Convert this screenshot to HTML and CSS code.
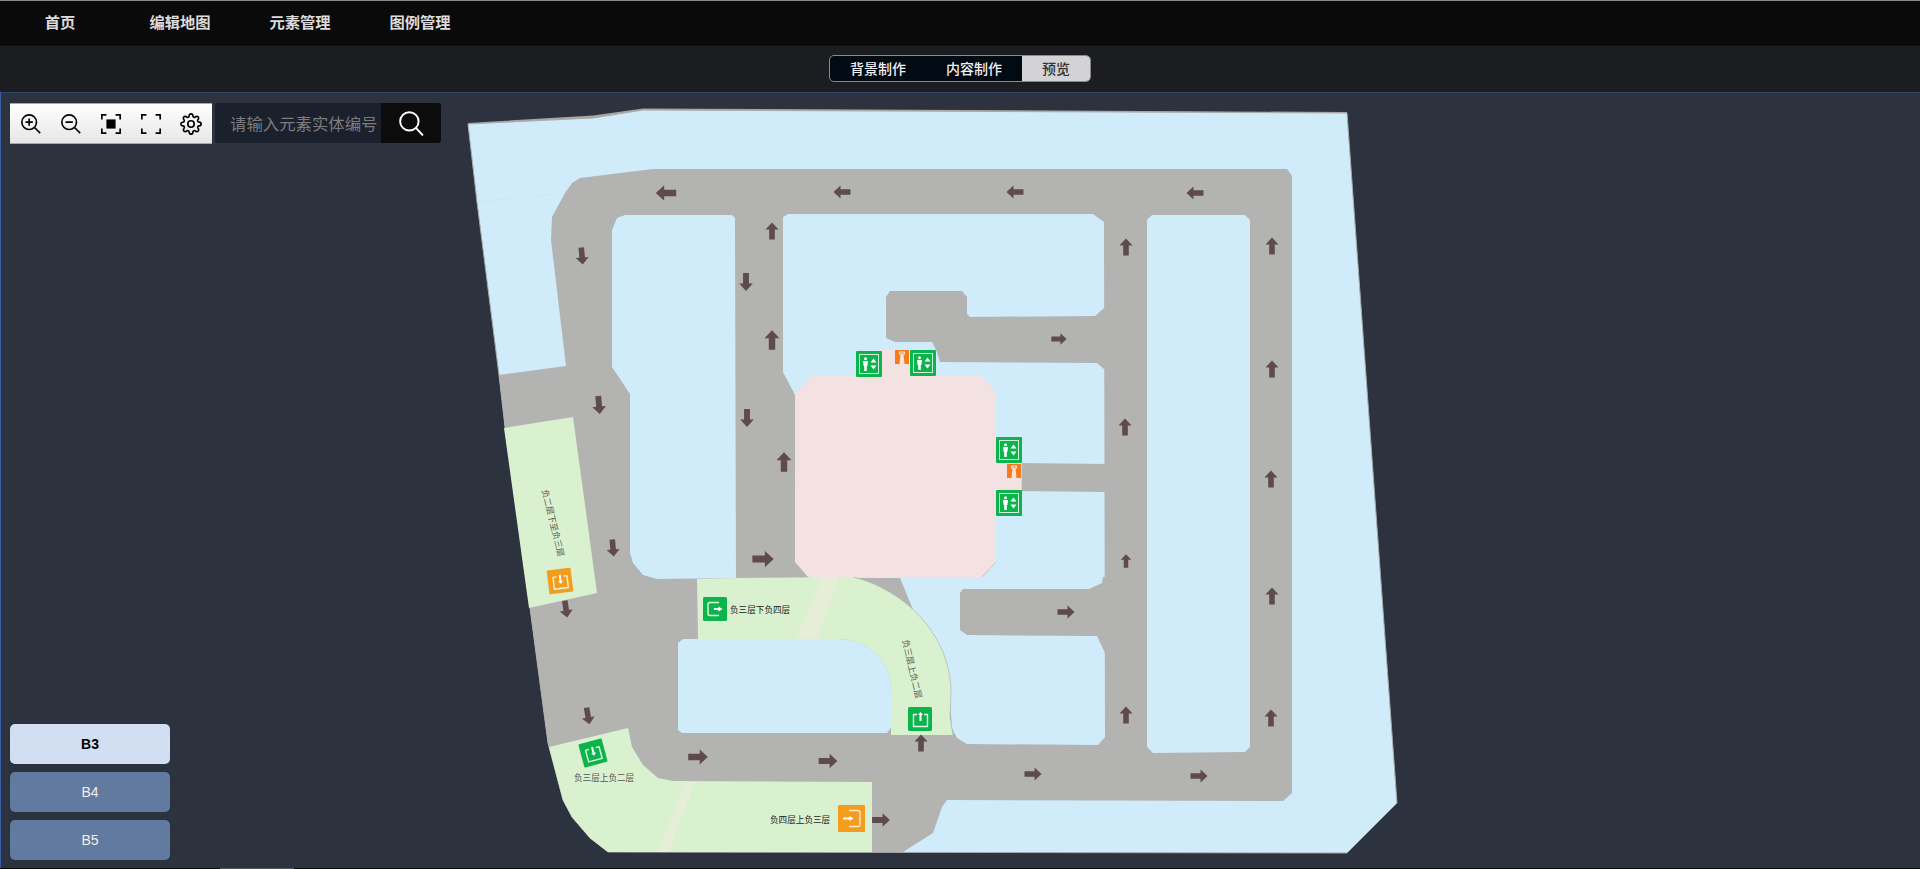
FILE: index.html
```html
<!DOCTYPE html>
<html>
<head>
	<meta charset="utf-8">
	<title>地图管理</title>
	<link rel="stylesheet" href="styles.css">
</head>
<body>
	<nav class="topnav">
		<a class="topnav-item">首页</a>
		<a class="topnav-item">编辑地图</a>
		<a class="topnav-item">元素管理</a>
		<a class="topnav-item">图例管理</a>
	</nav>

	<div class="subbar">
		<div class="segment">
			<button class="segment-btn">背景制作</button>
			<button class="segment-btn">内容制作</button>
			<button class="segment-btn active">预览</button>
		</div>
	</div>

	<main class="stage">
		<svg class="map" viewBox="0 92 1920 777" xmlns="http://www.w3.org/2000/svg">
			<defs>
				<path id="arrow" d="M0 -8.500L6.500 -1.500H2.800V8.500H-2.800V-1.500H-6.500Z"/>
				<g id="lift">
					<rect width="26" height="26" rx="1" fill="#0cb54c"/>
					<rect x="3.500" y="3.500" width="19" height="19" fill="none" stroke="#d5f0dc" stroke-width="1"/>
					<circle cx="9.500" cy="7.800" r="1.500" fill="#fff"/>
					<path d="M7 10H12L11.400 15H10.800V20H8.200V15H7.600Z" fill="#fff"/>
					<path d="M17.500 7.500L20.500 11.500H14.500ZM14.500 14.500H20.500L17.500 18.500Z" fill="#fff"/>
				</g>
				<g id="stair">
					<rect width="14" height="14" fill="#f47b20"/>
					<path d="M4 1.500H10V4.500H8.500L9.500 14H4.500L5.500 4.500H4Z" fill="#fde3d0"/>
					<rect x="5.300" y="2.600" width="3.400" height="1" fill="#f47b20"/>
				</g>
				<g id="ramp-up" fill="none" stroke="#e3f7e6" stroke-width="1.400" stroke-linejoin="round">
					<path d="M9 7.500H5.500V19.500H19.500V7.500H16"/>
					<path d="M12.500 14V6.500" stroke="#fff" stroke-width="2"/>
					<path d="M10 8L12.500 5L15 8Z" fill="#fff" stroke="none"/>
				</g>
				<g id="ramp-down" fill="none" stroke="#e3f7e6" stroke-width="1.400" stroke-linejoin="round">
					<path d="M9 7.500H5.500V19.500H19.500V7.500H16"/>
					<path d="M12.500 6V13" stroke="#fff" stroke-width="2"/>
					<path d="M10 12L12.500 15L15 12Z" fill="#fff" stroke="none"/>
				</g>
			</defs>

			<!-- site -->
			<path class="sliver" d="M468 123L593 115.500L643 108.500L1347 112L1347 115L643 112L593 119L468 125Z"/>
			<path class="lot site" d="M468 124L593 118L643 110L1347 113L1397 803L1347 853L608 852L590 838L572 817L563 800L548 743L530 608L505 427L499 375L477 202Z"/>
			<path class="seam" d="M477 202L565 193"/>

			<!-- road network -->
			<path class="road" d="M499 375L566 366L551 240L552 217L565 193L572 183L580 178L653 169L1287 169L1292 176L1292 793L1283 801L947 800L942 807L933 833L903 852L608 852L590 838L572 817L563 800L548 743L530 608L505 427Z"/>

			<!-- islands -->
			<path class="lot" d="M612 230L617 218L625 215L732 215L735 218L736 578L657 579L643 575L633 563L630 553L630 394L612 367Z"/>
			<path class="lot" d="M783 217L788 214L1093 214L1104 222L1105 737L1098 745L967 744L957 738L952 728L950 700L900 578L810 578L795 560L795 395L783 372Z"/>
			<path class="lot" d="M1147 220L1152 215L1245 215L1250 220L1250 747L1245 752L1153 753L1147 747Z"/>

			<!-- branch roads over the centre block -->
			<path class="road" d="M886 297L890 291L962 291L967 297L967 314L970 317L1095 316L1104 308L1108 308L1108 372L1105 370L1097 363L940 362L937 352L932 342L895 342L886 338Z"/>
			<path class="road" d="M1015 463L1108 464L1108 492L1015 491Z"/>
			<path class="road" d="M963 589L1089 589L1102 583L1103 577L1108 577L1108 655L1105 653L1097 636L967 635L960 630L960 593Z"/>

			<!-- ramps -->
			<path class="ramp" d="M504 428L573 417L597 593L529 608Z"/>
			<path class="ramp" d="M697 579L736 578L853 577C905 590 951 635 951 693L950 717L953 735L891 735L891 693C891 660 870 639 837 639L698 639Z"/>
			<path class="ramp-edge" d="M853 577C905 590 951 635 951 693L950 717L953 735"/>
			<path class="ramp-band" d="M822 577L839 577L817 639L796 639Z"/>
			<path class="ramp" d="M549 747L628 728L632 747L643 765L658 778L673 781L872 782L872 852L608 852L590 838L572 817L563 800Z"/>
			<path class="ramp-band" d="M687 782L695 782L668 852L657 852Z"/>
			<path class="lot" d="M678 643L683 639L837 639C870 639 891 660 891 693L891 728L887 733L682 733L678 730Z"/>

			<!-- building -->
			<path class="building" d="M880 350H910V376H982L996 393V445H1022V490H996V562L982 577H808L795 562L796 392L812 376H880Z"/>
			<path class="building-edge" d="M996 562L982 577M1022 463V490"/>

			<!-- arrows -->
			<g class="arrows">
				<use href="#arrow" transform="translate(666 193) rotate(-90) scale(1.2)"/>
				<use href="#arrow" transform="translate(842 192) rotate(-90)"/>
				<use href="#arrow" transform="translate(1015 192) rotate(-90)"/>
				<use href="#arrow" transform="translate(1195 193) rotate(-90)"/>
				<use href="#arrow" transform="translate(772 231)"/>
				<use href="#arrow" transform="translate(772 340) scale(1.15)"/>
				<use href="#arrow" transform="translate(784 462) scale(1.15)"/>
				<use href="#arrow" transform="translate(1126 247)"/>
				<use href="#arrow" transform="translate(1272 246)"/>
				<use href="#arrow" transform="translate(1272 369)"/>
				<use href="#arrow" transform="translate(1125 427)"/>
				<use href="#arrow" transform="translate(1271 479)"/>
				<use href="#arrow" transform="translate(1126 561) scale(.8)"/>
				<use href="#arrow" transform="translate(1272 596)"/>
				<use href="#arrow" transform="translate(1126 715)"/>
				<use href="#arrow" transform="translate(1271 718)"/>
				<use href="#arrow" transform="translate(921 743)"/>
				<use href="#arrow" transform="translate(582 256) rotate(175)"/>
				<use href="#arrow" transform="translate(746 282) rotate(180) scale(1.05)"/>
				<use href="#arrow" transform="translate(599 405) rotate(175) scale(1.05)"/>
				<use href="#arrow" transform="translate(747 418) rotate(180) scale(1.05)"/>
				<use href="#arrow" transform="translate(613 548) rotate(175)"/>
				<use href="#arrow" transform="translate(566 609) rotate(172)"/>
				<use href="#arrow" transform="translate(588 716) rotate(170)"/>
				<use href="#arrow" transform="translate(1059 339) rotate(90) scale(.9)"/>
				<use href="#arrow" transform="translate(1066 612) rotate(90)"/>
				<use href="#arrow" transform="translate(1033 774) rotate(90)"/>
				<use href="#arrow" transform="translate(1199 776) rotate(90)"/>
				<use href="#arrow" transform="translate(763 559) rotate(90) scale(1.25)"/>
				<use href="#arrow" transform="translate(698 757) rotate(90) scale(1.15)"/>
				<use href="#arrow" transform="translate(828 761) rotate(90) scale(1.1)"/>
				<use href="#arrow" transform="translate(881 820) rotate(90) scale(1.05)"/>
			</g>

			<!-- lifts and stairs -->
			<use href="#lift" x="856" y="351"/>
			<use href="#lift" x="910" y="350"/>
			<use href="#lift" x="996" y="437"/>
			<use href="#lift" x="996" y="490"/>
			<use href="#stair" x="895" y="350"/>
			<use href="#stair" x="1007" y="464"/>

			<!-- ramp signs -->
			<g transform="translate(703 597)">
				<rect width="24" height="24" rx="1.500" fill="#0cb54c"/>
				<path d="M16 5.500H7a2 2 0 0 0-2 2V16.500a2 2 0 0 0 2 2H16" fill="none" stroke="#e3f7e6" stroke-width="1.400"/>
				<path d="M11 12H16" stroke="#fff" stroke-width="2"/>
				<path d="M15.500 9.500L19.500 12L15.500 14.500Z" fill="#fff"/>
			</g>
			<g transform="translate(908 707)">
				<rect width="24" height="24" rx="1.500" fill="#0cb54c"/>
				<use href="#ramp-up"/>
			</g>
			<g transform="translate(560 581) rotate(-7) translate(-12 -12)">
				<rect width="24" height="24" rx="1" fill="#f39c1d"/>
				<use href="#ramp-down"/>
			</g>
			<g transform="translate(593 753) rotate(-15) translate(-12 -12)">
				<rect width="24" height="24" rx="1" fill="#0cb54c"/>
				<use href="#ramp-down"/>
			</g>
			<g transform="translate(838 805)">
				<rect width="27" height="27" rx="1" fill="#f39c1d"/>
				<path d="M11 5.500H20a2 2 0 0 1 2 2V19.500a2 2 0 0 1-2 2H11" fill="none" stroke="#fdeccf" stroke-width="1.400"/>
				<path d="M5 13.500H12" stroke="#fff" stroke-width="2"/>
				<path d="M11.500 11L15.500 13.500L11.500 16Z" fill="#fff"/>
			</g>

			<!-- labels -->
			<text class="label" x="730" y="613">负三层下负四层</text>
			<text class="label" x="770" y="823">负四层上负三层</text>
			<text class="label faint" x="574" y="781">负三层上负二层</text>
			<text class="label faint mid" transform="translate(553 523) rotate(76)" y="3">负二层下至负三层</text>
			<text class="label faint mid" transform="translate(912 669) rotate(77)" y="3">负三层上负二层</text>
		</svg>

		<div class="tools">
			<div class="toolbar">
				<svg class="tool" viewBox="0 0 24 24"><circle cx="10" cy="10" r="8"/><path d="M15.800 15.800L22 22M6 10H14M10 6V14"/></svg>
				<svg class="tool" viewBox="0 0 24 24"><circle cx="10" cy="10" r="8"/><path d="M15.800 15.800L22 22M6 10H14"/></svg>
				<svg class="tool" viewBox="0 0 24 24"><path d="M2 7V2H7M17 2H22V7M22 17V22H17M7 22H2V17"/><rect class="solid" x="7" y="7" width="10" height="10"/></svg>
				<svg class="tool" viewBox="0 0 24 24"><path d="M2 7V2H7M17 2H22V7M22 17V22H17M7 22H2V17"/></svg>
				<svg class="tool" viewBox="0 0 24 24"><circle cx="12" cy="12" r="3.500"/><path d="M19.400 15a1.650 1.650 0 0 0 .33 1.820l.06.06a2 2 0 0 1 0 2.830 2 2 0 0 1-2.830 0l-.06-.06a1.650 1.650 0 0 0-1.820-.33 1.650 1.650 0 0 0-1 1.510V21a2 2 0 0 1-2 2 2 2 0 0 1-2-2v-.09A1.650 1.650 0 0 0 9 19.400a1.650 1.650 0 0 0-1.820.33l-.06.06a2 2 0 0 1-2.830 0 2 2 0 0 1 0-2.830l.06-.06a1.650 1.650 0 0 0 .33-1.820 1.650 1.650 0 0 0-1.510-1H3a2 2 0 0 1-2-2 2 2 0 0 1 2-2h.09A1.650 1.650 0 0 0 4.600 9a1.650 1.650 0 0 0-.33-1.820l-.06-.06a2 2 0 0 1 0-2.830 2 2 0 0 1 2.830 0l.06.06a1.650 1.650 0 0 0 1.820.33H9a1.650 1.650 0 0 0 1-1.510V3a2 2 0 0 1 2-2 2 2 0 0 1 2 2v.09a1.650 1.650 0 0 0 1 1.510 1.650 1.650 0 0 0 1.820-.33l.06-.06a2 2 0 0 1 2.830 0 2 2 0 0 1 0 2.830l-.06.06a1.650 1.650 0 0 0-.33 1.820V9a1.650 1.650 0 0 0 1.510 1H21a2 2 0 0 1 2 2 2 2 0 0 1-2 2h-.09a1.650 1.650 0 0 0-1.510 1z"/></svg>
			</div>
			<div class="search">
				<input class="search-input" placeholder="请输入元素实体编号">
				<button class="search-btn">
					<svg viewBox="0 0 24 24" width="26" height="26" fill="none" stroke="#fff" stroke-width="1.800"><circle cx="10.500" cy="10.500" r="8.500"/><path d="M16.500 16.500L23 23.500"/></svg>
				</button>
			</div>
		</div>

		<div class="floors">
			<button class="floor active">B3</button>
			<button class="floor">B4</button>
			<button class="floor">B5</button>
		</div>
	</main>
</body>
</html>
```

FILE: styles.css
```css
*{
	box-sizing: border-box;
}

html, body{
	height: 100%;
}

body{
	margin: 0px;
	display: flex;
	flex-direction: column;
	overflow: hidden;
	background: #2c323e;
	font-family: "Noto Sans CJK SC", "Liberation Sans", sans-serif;
}

button{
	font: inherit;
	border: 0px;
	padding: 0px;
}

.topnav{
	height: 46px;
	display: flex;
	background: #0a0a0a;
	border-top: 1px solid #8c8c8c;
	border-bottom: 1px solid #111;
}

.topnav-item{
	width: 120px;
	padding-bottom: 4px;
	display: flex;
	align-items: center;
	justify-content: center;
	color: #dcdcdc;
	font-size: 15.300px;
	font-weight: 700;
}

.subbar{
	height: 46px;
	display: flex;
	align-items: center;
	justify-content: center;
	background: #1b1d21;
}

.segment{
	display: flex;
	height: 27px;
	margin-top: -1px;
	border: 1px solid #8a8a8a;
	border-radius: 5px;
	overflow: hidden;
	background: #020a14;
}

.segment-btn{
	width: 96px;
	background: transparent;
	color: #f0f0f0;
	font-size: 14px;
	font-weight: 500;
	line-height: 25px;
}

.segment-btn.active{
	width: 68px;
	background: #d3d3d6;
	color: #333;
}

.stage{
	flex: 1;
	position: relative;
	background: #2c323e;
	box-shadow: inset 1px 1px 0 #34496f;
	border-bottom: 1px solid #0a0a0a;
}

.stage:before{
	content: "";
	position: absolute;
	left: 0px;
	top: 0px;
	bottom: 0px;
	width: 1px;
	background: #3a5ea8;
}

.stage:after{
	content: "";
	position: absolute;
	left: 220px;
	bottom: -1px;
	width: 74px;
	height: 1px;
	background: #55575c;
}

.map{
	position: absolute;
	top: 0px;
	left: 0px;
	width: 1920px;
	height: 777px;
}

.lot{
	fill: #d0ebfa;
}

.site{
	stroke: #a9a9a9;
	stroke-width: 1;
}

.sliver{
	fill: #a8a5a2;
}

.seam{
	stroke: #c9e6f6;
	stroke-width: 1;
	stroke-dasharray: 6 4;
}

.road{
	fill: #b3b3b1;
}

.ramp{
	fill: #daf1d0;
}

.ramp-edge{
	fill: none;
	stroke: #b4bcb2;
	stroke-width: .8;
}

.ramp-band{
	fill: #e6eed8;
}

.building{
	fill: #f4e1e1;
}

.building-edge{
	fill: none;
	stroke: #bdb9b9;
	stroke-width: .8;
}

.arrows{
	fill: #5f4a4e;
}

.label{
	font-size: 8.600px;
	fill: #222;
}

.label.faint{
	fill: #555;
}

.label.mid{
	text-anchor: middle;
}

.tools{
	position: absolute;
	top: 11px;
	left: 10px;
	display: flex;
	gap: 3px;
}

.toolbar{
	width: 202px;
	height: 41px;
	display: flex;
	align-items: center;
	justify-content: space-between;
	padding: 0px 10px;
	background: linear-gradient(#fff, #e6e6e6);
	border-top: 1px solid #a8a8a8;
	border-bottom: 1px solid #a8a8a8;
}

.tool{
	width: 22px;
	height: 22px;
	fill: none;
	stroke: #000;
	stroke-width: 1.800;
}

.tool .solid{
	fill: #000;
	stroke: none;
}

.search{
	width: 226px;
	height: 40px;
	display: flex;
	border-radius: 3px;
	overflow: hidden;
}

.search-input{
	width: 166px;
	height: 40px;
	padding: 0px 0px 0px 15px;
	border: 0px;
	outline: 0px;
	background: #1a202c;
	color: #ccc;
	font: inherit;
	font-size: 16.400px;
}

.search-input::placeholder{
	color: #7c7c7c;
	opacity: 1;
}

.search-btn{
	width: 60px;
	display: flex;
	align-items: center;
	justify-content: center;
	background: #0c0c0c;
}

.floors{
	position: absolute;
	left: 10px;
	bottom: 8px;
	display: flex;
	flex-direction: column;
	gap: 8px;
}

.floor{
	width: 160px;
	height: 40px;
	border-radius: 5px;
	background: #627a9f;
	color: #f0f0f0;
	font-family: "Liberation Sans", sans-serif;
	font-size: 14px;
}

.floor.active{
	background: #d2dff2;
	color: #000;
	font-weight: 700;
}
```
